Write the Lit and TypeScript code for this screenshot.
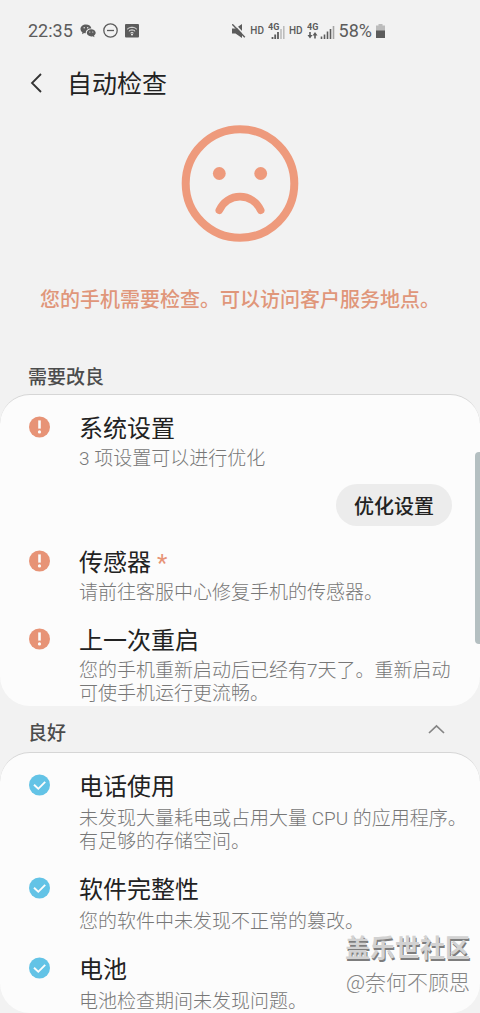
import { LitElement, html, svg, css } from "lit";
import { customElement, property, state } from "lit/decorators.js";

interface CheckItem {
  title: string;
  lines: string[];
  starred?: boolean;
  action?: string;
}

const NEEDS_WORK: CheckItem[] = [
  { title: "系统设置", lines: ["3 项设置可以进行优化"], action: "优化设置" },
  { title: "传感器", lines: ["请前往客服中心修复手机的传感器。"], starred: true },
  { title: "上一次重启", lines: ["您的手机重新启动后已经有7天了。重新启动", "可使手机运行更流畅。"] },
];

const GOOD: CheckItem[] = [
  { title: "电话使用", lines: ["未发现大量耗电或占用大量 CPU 的应用程序。", "有足够的存储空间。"] },
  { title: "软件完整性", lines: ["您的软件中未发现不正常的篡改。"] },
  { title: "电池", lines: ["电池检查期间未发现问题。"] },
];

const warnMark = svg`
  <circle cx="11.5" cy="11" r="10.5" fill="#e79376" />
  <path d="M11.5 4.4V12.6" stroke="#fcfcfc" stroke-width="2.6" />
  <circle cx="11.5" cy="15.9" r="1.6" fill="#fcfcfc" />`;

const okMark = svg`
  <circle cx="11.5" cy="11" r="10.5" fill="#63c3e6" />
  <path d="M6 10.8L10.3 14.8L17.2 7.8" fill="none" stroke="#fcfcfc" stroke-width="1.9" />`;

@customElement("status-bar")
export class StatusBar extends LitElement {
  static styles = css`
    :host {
      display: flex;
      align-items: center;
      justify-content: space-between;
      height: 61px;
      padding: 0 95px 0 28px;
      color: #5c5c5c;
      font-size: 18px;
    }
    .group {
      display: flex;
      align-items: center;
      gap: 7px;
    }
    .right {
      gap: 4px;
    }
    .hd {
      font-size: 10px;
      font-weight: 500;
    }
    svg {
      display: block;
      flex: none;
    }
    .net {
      font-size: 9px;
      font-weight: 700;
    }
  `;

  private network(arrows: boolean) {
    return svg`
      <text class="net" x="0" y="7" fill="#5c5c5c">4G</text>
      ${arrows
        ? svg`<path d="M2.200 9H3.800V12H5.500L3 15.500L.5 12H2.200ZM7.200 15.500H8.800V12.500H10.500L8 9L5.500 12.500H7.200Z" fill="#5c5c5c" />
              <path d="M14.500 16V13.500M17.500 16V11.500M20.500 16V8.500M23.500 16V6" stroke="#5c5c5c" stroke-width="1.6" />
              <path d="M26.500 16V3" stroke="#a5a5a5" stroke-width="1.6" />`
        : svg`<path d="M4.500 16V14M7.200 16V11.500M10 16V9" stroke="#5c5c5c" stroke-width="1.8" />
              <path d="M13 16V6M15.800 16V3" stroke="#bcbcbc" stroke-width="1.6" />`}`;
  }

  render() {
    return html`
      <div class="group">
        <span>22:35</span>
        <svg width="16" height="14" viewBox="0 0 16 14" fill="#5c5c5c">
          <path d="M6 .6C2.8.6.5 2.600.5 5c0 1.400.8 2.600 2 3.400L2 10.200l2.200-1.100c.5.100 1 .2 1.500.2C5.500 6.400 7.900 4.300 11.400 4.400 11 2.200 8.800.6 6 .6Z" />
          <path d="M15.700 8.800c0-2-2-3.600-4.400-3.600S6.800 6.800 6.800 8.800s2 3.600 4.500 3.600c.5 0 1-.1 1.400-.2l1.800 1-.5-1.600c1-.6 1.700-1.700 1.700-2.800Z" />
          <g fill="#f2f2f2"><circle cx="4.200" cy="3.800" r=".7" /><circle cx="7.700" cy="3.800" r=".7" /><circle cx="9.800" cy="8" r=".6" /><circle cx="12.800" cy="8" r=".6" /></g>
        </svg>
        <svg width="15" height="15" viewBox="0 0 15 15" fill="none" stroke="#5c5c5c" stroke-width="1.3">
          <circle cx="7.500" cy="7.500" r="6.700" /><path d="M4 7.500H11" />
        </svg>
        <svg width="14" height="14" viewBox="0 0 14 14" fill="none">
          <rect width="14" height="13.500" rx="1" fill="#5c5c5c" />
          <path d="M2.200 5.200C5 2.600 9 2.600 11.800 5.200M3.900 7.200C5.800 5.500 8.200 5.500 10.100 7.200M5.500 9C6.500 8.200 7.500 8.200 8.500 9" stroke="#f2f2f2" />
          <circle cx="7" cy="10.600" r="1" fill="#f2f2f2" />
        </svg>
      </div>
      <div class="group right">
        <svg width="14" height="14" viewBox="0 0 14 14">
          <path d="M0 4.500H3.500L10 0V14L3.500 9.500H0Z" fill="#5c5c5c" />
          <path d="M1.500 -1L14 12.500" stroke="#f2f2f2" stroke-width="1.600" />
          <path d="M.3 .3L12.800 13.300" stroke="#5c5c5c" stroke-width="1.400" />
        </svg>
        <span class="hd">HD</span>
        <svg width="17" height="16" viewBox="0 0 17 16">${this.network(false)}</svg>
        <span class="hd">HD</span>
        <svg width="28" height="16" viewBox="0 0 28 16">${this.network(true)}</svg>
        <span>58%</span>
        <svg width="9" height="14" viewBox="0 0 9 14">
          <path d="M2.500 0H6.500V1.500H9V7H0V1.500H2.500Z" fill="#bcbcbc" />
          <path d="M0 6.500H9V14H0Z" fill="#5c5c5c" />
        </svg>
      </div>
    `;
  }
}

@customElement("check-card")
export class CheckCard extends LitElement {
  @property({ attribute: false }) items: CheckItem[] = [];
  @property() kind: "warn" | "ok" = "warn";

  static styles = css`
    :host {
      display: block;
    }
    .card {
      display: flex;
      flex-direction: column;
      gap: 19px;
      margin: 0;
      padding: 16px 0 0;
      list-style: none;
      background: #fcfcfc;
      border-top: 1px solid #d6d6d6;
      border-radius: 30px;
    }
    .warn {
      padding-bottom: 1px;
    }
    .item {
      display: grid;
      grid-template-columns: 23px 1fr;
      column-gap: 28px;
      padding-left: 28px;
    }
    .mark {
      display: block;
      margin-top: 5px;
    }
    .title {
      margin: 0;
      font-size: 24px;
      line-height: 36px;
      font-weight: 400;
      color: #222;
    }
    .star {
      color: #e79376;
    }
    .desc {
      margin: 0;
      font-size: 19px;
      line-height: 23px;
      font-weight: 300;
      color: #777;
    }
    .ok .desc {
      margin-top: 2px;
    }
    .line {
      display: block;
      white-space: nowrap;
    }
    .action {
      display: block;
      margin: 14px 28px 0 auto;
      padding: 0 18px;
      height: 42px;
      border: 0;
      border-radius: 21px;
      background: #ececec;
      color: #222;
      font: inherit;
      font-size: 20px;
      font-weight: 500;
    }
  `;

  render() {
    return html`
      <ul class="card ${this.kind}">
        ${this.items.map(
          (item) => html`
            <li class="item">
              <svg class="mark" width="23" height="22" viewBox="0 0 23 22" aria-hidden="true">
                ${this.kind === "warn" ? warnMark : okMark}
              </svg>
              <div>
                <h3 class="title">${item.title}${item.starred ? html` <span class="star">*</span>` : ""}</h3>
                <p class="desc">${item.lines.map((line) => html`<span class="line">${line}</span>`)}</p>
                ${item.action ? html`<button class="action" type="button">${item.action}</button>` : ""}
              </div>
            </li>
          `,
        )}
      </ul>
    `;
  }
}

@customElement("app-root")
export class AppRoot extends LitElement {
  @state() private open = true;

  static styles = css`
    :host {
      display: block;
      position: relative;
      overflow: hidden;
      background: #f2f2f2;
      color: #222;
      font-family: Roboto, "Noto Sans CJK SC", sans-serif;
    }
    .bar {
      display: flex;
      align-items: center;
      gap: 20px;
      height: 44px;
      padding-left: 26px;
    }
    .back {
      display: flex;
      padding: 0 4px;
      border: 0;
      background: none;
    }
    .heading {
      margin: 0;
      padding-top: 4px;
      font-size: 25px;
      line-height: 36px;
      font-weight: 400;
    }
    .hero {
      display: flex;
      flex-direction: column;
      align-items: center;
      gap: 42px;
      padding-top: 20px;
    }
    .message {
      margin: 0;
      font-size: 20px;
      line-height: 30px;
      font-weight: 500;
      color: #e0967a;
    }
    .section {
      display: flex;
      align-items: center;
      justify-content: space-between;
      height: 46px;
      padding: 0 35px 0 28px;
    }
    .first {
      margin-top: 37px;
      height: 42px;
    }
    .label {
      margin: 0;
      padding-top: 10px;
      font-size: 19px;
      line-height: 28px;
      font-weight: 500;
      color: #4c4c4c;
    }
    .toggle {
      display: flex;
      padding: 0;
      border: 0;
      background: none;
    }
    .thumb {
      position: absolute;
      top: 452px;
      right: 0;
      width: 5px;
      height: 192px;
      border-radius: 4px 0 0 4px;
      background: #b4bfc1;
    }
    .credit {
      position: absolute;
      right: 10px;
      bottom: 16px;
      text-align: right;
      color: #858585;
    }
    .brand {
      display: block;
      font-size: 25px;
      line-height: 32px;
      font-weight: 700;
      color: #d2d2d2;
      text-shadow: 1px 2px 0 #7d7d7d;
    }
    .author {
      display: block;
      font-family: "Noto Sans CJK SC", sans-serif;
      font-size: 21px;
      line-height: 32px;
      font-weight: 300;
    }
  `;

  render() {
    return html`
      <status-bar></status-bar>
      <header class="bar">
        <button class="back" type="button" aria-label="返回">
          <svg width="13" height="20" viewBox="0 0 13 20" fill="none" stroke="#333" stroke-width="1.800">
            <path d="M11 1L2 10L11 19" />
          </svg>
        </button>
        <h1 class="heading">自动检查</h1>
      </header>
      <div class="hero">
        <svg width="118" height="118" viewBox="0 0 118 118" fill="none" stroke="#ee9a7c" aria-hidden="true">
          <circle cx="59" cy="58.500" r="54.300" stroke-width="8" />
          <g fill="#ee9a7c" stroke="none">
            <circle cx="38.300" cy="48.500" r="6.400" />
            <circle cx="79.700" cy="48.500" r="6.400" />
          </g>
          <path d="M38.300 85.300A22.500 22.500 0 0 1 79.700 85.300" stroke-width="7.600" stroke-linecap="round" />
        </svg>
        <p class="message">您的手机需要检查。可以访问客户服务地点。</p>
      </div>
      <div class="section first"><h2 class="label">需要改良</h2></div>
      <check-card kind="warn" .items=${NEEDS_WORK}></check-card>
      <div class="section">
        <h2 class="label">良好</h2>
        <button
          class="toggle"
          type="button"
          aria-label="良好"
          aria-expanded=${this.open ? "true" : "false"}
          @click=${() => (this.open = !this.open)}
        >
          <svg width="17" height="10" viewBox="0 0 17 10" fill="none" stroke="#858585" stroke-width="1.700">
            <path d="M1 9L8.500 2L16 9" />
          </svg>
        </button>
      </div>
      ${this.open ? html`<check-card kind="ok" .items=${GOOD}></check-card>` : ""}
      <div class="thumb"></div>
      <div class="credit">
        <span class="brand">盖乐世社区</span>
        <span class="author">@奈何不顾思</span>
      </div>
    `;
  }
}
